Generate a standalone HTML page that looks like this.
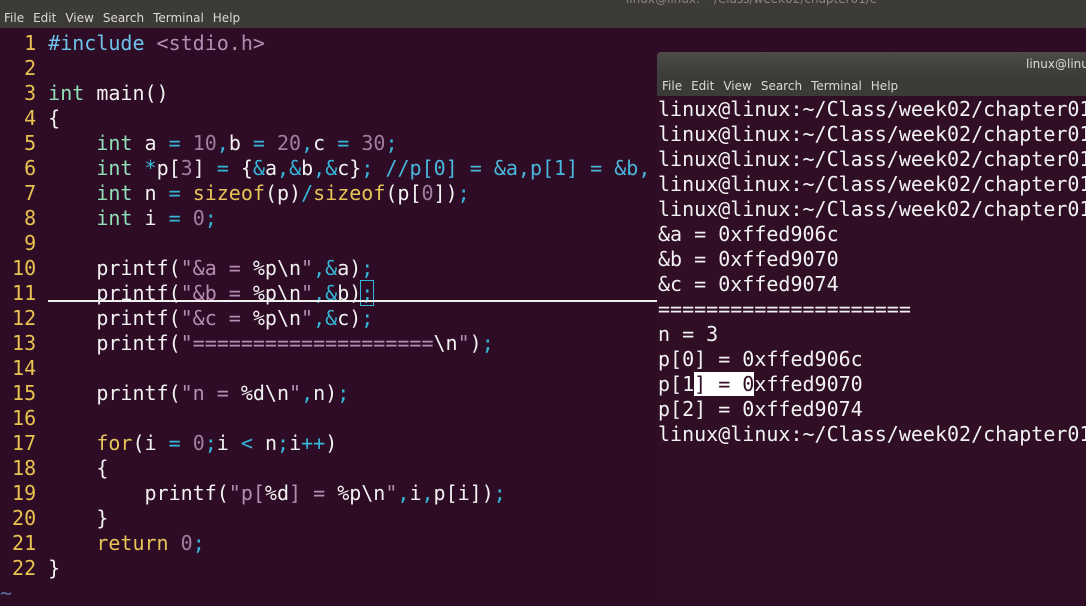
<!DOCTYPE html>
<html><head><meta charset="utf-8"><style>
body{margin:0;width:1086px;height:598px;background:#2f0c25;overflow:hidden;position:relative;font-family:"DejaVu Sans Mono","Liberation Mono",monospace;}
.top{position:absolute;left:0;top:0;width:1086px;height:28px;background:#3d3b37;}
.menu{position:absolute;font-family:"DejaVu Sans","Liberation Sans",sans-serif;font-size:12px;color:#dcdad5;}
.menu span{margin-right:9px}
pre{margin:0;position:absolute;font-family:"DejaVu Sans Mono",monospace;font-size:20px;line-height:25px;color:#f2f2f2;white-space:pre;}
.ln{color:#e8c350}.ty{color:#8fe0b6}.op{color:#35b7d9}.st{color:#b58db2}.nu{color:#a27d9e}.kw{color:#e6c458}.pp{color:#6ec3ea}.cm{color:#49b7dc}
.term{position:absolute;left:657px;top:52px;width:429px;height:546px;background:#300e26;}
.tbar{position:absolute;left:0;top:0;width:429px;height:44px;background:linear-gradient(#4d4b47,#3c3b37 55%,#3c3b37);border-radius:4px 0 0 0;}
.sel{background:#fff;color:#300e26}
</style></head><body>
<div class="top"></div>
<div class="menu" style="left:4px;top:11px"><span>File</span><span>Edit</span><span>View</span><span>Search</span><span>Terminal</span><span>Help</span></div>
<div class="menu" style="left:626px;top:-8px;color:#8a8783">linux@linux: ~/Class/week02/chapter01/c</div>
<pre style="left:0;top:31px"><span class="ln">  1 </span><span class="pp">#include</span> <span class="st">&lt;stdio.h&gt;</span>
<span class="ln">  2 </span>
<span class="ln">  3 </span><span class="ty">int</span> main()
<span class="ln">  4 </span>{
<span class="ln">  5 </span>    <span class="ty">int</span> a <span class="op">=</span> <span class="nu">10</span><span class="op">,</span>b <span class="op">=</span> <span class="nu">20</span><span class="op">,</span>c <span class="op">=</span> <span class="nu">30</span><span class="op">;</span>
<span class="ln">  6 </span>    <span class="ty">int</span> <span class="op">*</span>p[<span class="nu">3</span>] <span class="op">=</span> {<span class="op">&amp;</span>a<span class="op">,&amp;</span>b<span class="op">,&amp;</span>c}<span class="op">;</span> <span class="cm">//p[0] = &amp;a,p[1] = &amp;b,</span>
<span class="ln">  7 </span>    <span class="ty">int</span> n <span class="op">=</span> <span class="kw">sizeof</span>(p)<span class="op">/</span><span class="kw">sizeof</span>(p[<span class="nu">0</span>])<span class="op">;</span>
<span class="ln">  8 </span>    <span class="ty">int</span> i <span class="op">=</span> <span class="nu">0</span><span class="op">;</span>
<span class="ln">  9 </span>
<span class="ln"> 10 </span>    printf(<span class="st">"&amp;a = </span>%p\n<span class="st">"</span><span class="op">,&amp;</span>a)<span class="op">;</span>
<span class="ln"> 11 </span>    printf(<span class="st">"&amp;b = </span>%p\n<span class="st">"</span><span class="op">,&amp;</span>b)<span class="op" style="outline:1px solid #35b7d9">;</span>
<span class="ln"> 12 </span>    printf(<span class="st">"&amp;c = </span>%p\n<span class="st">"</span><span class="op">,&amp;</span>c)<span class="op">;</span>
<span class="ln"> 13 </span>    printf(<span class="st">"====================</span>\n<span class="st">"</span>)<span class="op">;</span>
<span class="ln"> 14 </span>
<span class="ln"> 15 </span>    printf(<span class="st">"n = </span>%d\n<span class="st">"</span><span class="op">,</span>n)<span class="op">;</span>
<span class="ln"> 16 </span>
<span class="ln"> 17 </span>    <span class="kw">for</span>(i <span class="op">=</span> <span class="nu">0</span><span class="op">;</span>i <span class="op">&lt;</span> n<span class="op">;</span>i<span class="op">++</span>)
<span class="ln"> 18 </span>    {
<span class="ln"> 19 </span>        printf(<span class="st">"p[</span>%d<span class="st">] = </span>%p\n<span class="st">"</span><span class="op">,</span>i<span class="op">,</span>p[i])<span class="op">;</span>
<span class="ln"> 20 </span>    }
<span class="ln"> 21 </span>    <span class="kw">return</span> <span class="nu">0</span><span class="op">;</span>
<span class="ln"> 22 </span>}
<span style="color:#5a6fa0">~</span></pre>
<div style="position:absolute;left:48px;top:300px;width:609px;height:2px;background:#f0f0f0"></div>
<div class="term">
<div class="tbar"></div>
<div class="menu" style="left:369px;top:5px;color:#dcdad5">linux@linux</div>
<div class="menu" style="left:5px;top:27px"><span>File</span><span>Edit</span><span>View</span><span>Search</span><span>Terminal</span><span>Help</span></div>
<pre style="left:1px;top:45px">linux@linux:~/Class/week02/chapter01
linux@linux:~/Class/week02/chapter01
linux@linux:~/Class/week02/chapter01
linux@linux:~/Class/week02/chapter01
linux@linux:~/Class/week02/chapter01
&amp;a = 0xffed906c
&amp;b = 0xffed9070
&amp;c = 0xffed9074
=====================
n = 3
p[0] = 0xffed906c
p[1<span class="sel">] = 0</span>xffed9070
p[2] = 0xffed9074
linux@linux:~/Class/week02/chapter01</pre>
</div>
</body></html>
